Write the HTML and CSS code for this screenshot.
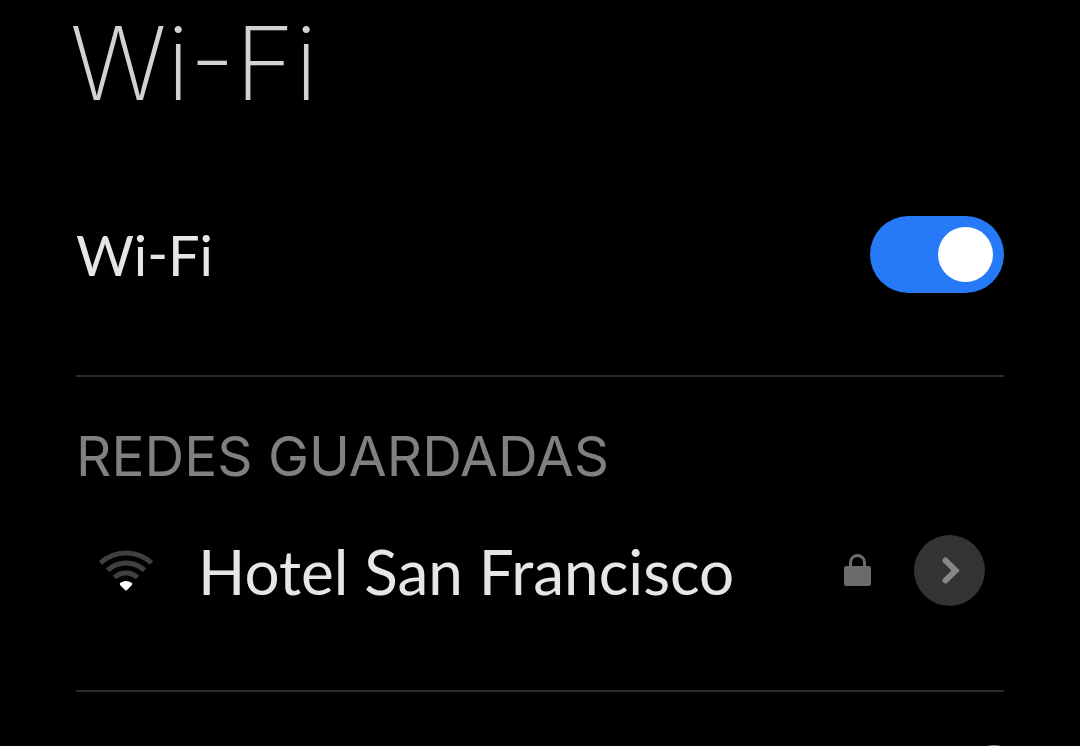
FILE: index.html
```html
<!DOCTYPE html>
<html lang="es">
<head>
<meta charset="utf-8">
<meta name="viewport" content="width=device-width, initial-scale=1">
<title>Wi-Fi</title>
<link rel="stylesheet" href="styles.css">
</head>
<body>
<main class="page">
  <h1 class="title">Wi-Fi</h1>

  <section class="setting">
    <label class="setting-label" for="wifi">Wi-Fi</label>
    <input class="switch" type="checkbox" role="switch" id="wifi" checked>
  </section>

  <section class="saved">
    <h2 class="saved-heading">REDES GUARDADAS</h2>
    <div class="network">
      <svg class="signal" viewBox="0 0 56 44" aria-hidden="true">
        <g class="signal-arcs">
          <path d="M2.500 14A37.500 37.500 0 0 1 53.500 14"/>
          <path d="M9.500 21.300A27 27 0 0 1 46.500 21.300"/>
          <path d="M16.500 28.500A17 17 0 0 1 39.500 28.500"/>
        </g>
        <path class="signal-dot" d="M22 34Q28 30 34 34Q34.500 35 33.500 36.500L29 41Q28 42 27 41L22.500 36.500Q21.500 35 22 34Z"/>
      </svg>
      <span class="network-name">Hotel San Francisco</span>
      <svg class="lock" viewBox="0 0 27 34" aria-hidden="true">
        <path class="lock-shackle" d="M6.500 13V8.500A7 7 0 0 1 20.500 8.500V13"/>
        <rect class="lock-body" x="0" y="12" width="27" height="20" rx="2.500"/>
      </svg>
      <button class="details" type="button" aria-label="Detalles de Hotel San Francisco">
        <svg class="chevron" viewBox="0 0 20 30" aria-hidden="true"><path d="M5.500 4.500L15.500 14.500L5.500 24.500"/></svg>
      </button>
    </div>
  </section>

  <svg class="next" viewBox="0 0 20 1" aria-hidden="true"><circle cx="10" cy="22" r="22"/></svg>
</main>
</body>
</html>
```

FILE: styles.css
```css
* { box-sizing: border-box; }

body {
  margin: 0;
  background: #000;
  color: #e6e6e6;
  font-family: Lato, "Liberation Sans", sans-serif;
}

.page {
  display: flex;
  flex-direction: column;
  padding: 0 76px;
}

.title,
.saved-heading {
  font-family: Inter, "Liberation Sans", sans-serif;
}

.title {
  margin: 0 -6px;
  color: #d2d2d2;
  font-size: 102px;
  font-weight: 200;
  line-height: 126px;
  font-feature-settings: "case";
}

.setting {
  display: flex;
  align-items: center;
  justify-content: space-between;
  padding: 90px 0 82px;
  border-bottom: 2px solid #2b2b2b;
}

.setting-label {
  font-size: 56px;
  line-height: 76px;
  font-feature-settings: "case";
}

.switch {
  appearance: none;
  display: flex;
  align-items: center;
  justify-content: flex-end;
  width: 134px;
  height: 77px;
  margin: 0;
  padding: 0 11px;
  border-radius: 39px;
  background: #277af7;
}

.switch::before {
  content: "";
  width: 55px;
  height: 55px;
  border-radius: 50%;
  background: #fff;
}

.switch:not(:checked) {
  justify-content: flex-start;
  background: #333;
}

.saved {
  padding: 49px 0 84px;
  border-bottom: 2px solid #2b2b2b;
}

.saved-heading {
  margin: 0 0 49px;
  color: #808080;
  font-size: 55px;
  font-weight: 400;
  line-height: 60px;
}

.network {
  display: flex;
  align-items: center;
  padding: 0 19px 0 22px;
}

.signal {
  flex: none;
  width: 56px;
  height: 44px;
  margin-right: 44px;
}

.signal-arcs {
  fill: none;
  stroke: #404040;
  stroke-width: 5;
}

.signal-dot { fill: #fff; }

.network-name {
  flex: 1;
  font-size: 62px;
  line-height: 70px;
}

.lock {
  flex: none;
  width: 27px;
  height: 34px;
  margin-right: 43px;
}

.lock-shackle {
  fill: none;
  stroke: #6b6b6b;
  stroke-width: 3;
}

.lock-body { fill: #6b6b6b; }

.details {
  display: flex;
  flex: none;
  align-items: center;
  justify-content: center;
  width: 71px;
  height: 71px;
  padding: 0;
  border: 0;
  border-radius: 50%;
  background: #333;
}

.chevron {
  width: 20px;
  height: 30px;
  fill: none;
  stroke: #888;
  stroke-width: 6;
  stroke-linecap: round;
}

.next {
  align-self: flex-end;
  width: 20px;
  height: 1px;
  margin-top: 53px;
  fill: #888;
}
```
